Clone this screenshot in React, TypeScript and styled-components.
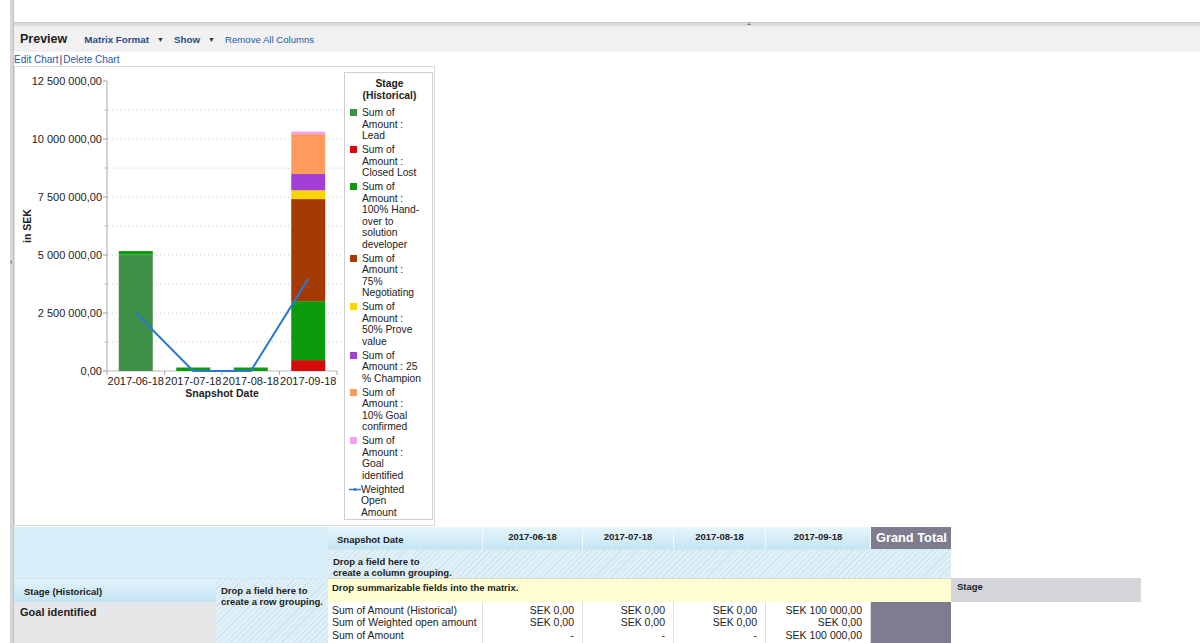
import React, { FC } from 'react';
import styled, { createGlobalStyle } from 'styled-components';

type Segment = { key: string; value: number };
type Bar = { label: string; segments: Segment[]; weighted: number };
type LegendItem = { key: string; color: string; lines: string[]; isLine?: boolean };

const legendItems: LegendItem[] = [
  { key: 'lead', color: '#3e8f47', lines: ['Sum of', 'Amount :', 'Lead'] },
  { key: 'lost', color: '#d40b0b', lines: ['Sum of', 'Amount :', 'Closed Lost'] },
  {
    key: 'handover',
    color: '#0b9b0b',
    lines: ['Sum of', 'Amount :', '100% Hand-', 'over to', 'solution', 'developer'],
  },
  { key: 'nego', color: '#a63a04', lines: ['Sum of', 'Amount :', '75%', 'Negotiating'] },
  { key: 'prove', color: '#f6d500', lines: ['Sum of', 'Amount :', '50% Prove', 'value'] },
  { key: 'champ', color: '#a33fd7', lines: ['Sum of', 'Amount : 25', '% Champion'] },
  { key: 'confirmed', color: '#fd9b5d', lines: ['Sum of', 'Amount :', '10% Goal', 'confirmed'] },
  { key: 'identified', color: '#f5a2ee', lines: ['Sum of', 'Amount :', 'Goal', 'identified'] },
  { key: 'weighted', color: '#2a78d0', lines: ['Weighted', 'Open', 'Amount'], isLine: true },
];

const colorOf = (key: string) => legendItems.find((i) => i.key === key)?.color ?? '#999';

const bars: Bar[] = [
  {
    label: '2017-06-18',
    segments: [
      { key: 'lead', value: 5020000 },
      { key: 'handover', value: 150000 },
    ],
    weighted: 2500000,
  },
  { label: '2017-07-18', segments: [{ key: 'handover', value: 150000 }], weighted: 0 },
  { label: '2017-08-18', segments: [{ key: 'handover', value: 150000 }], weighted: 0 },
  {
    label: '2017-09-18',
    segments: [
      { key: 'lost', value: 470000 },
      { key: 'handover', value: 2540000 },
      { key: 'nego', value: 4400000 },
      { key: 'prove', value: 380000 },
      { key: 'champ', value: 700000 },
      { key: 'confirmed', value: 1720000 },
      { key: 'identified', value: 110000 },
    ],
    weighted: 3970000,
  },
];

const yTicks = ['0,00', '2 500 000,00', '5 000 000,00', '7 500 000,00', '10 000 000,00', '12 500 000,00'];

// chart geometry, in page pixels (svg viewBox is offset to match)
const AXIS_X = 107;
const BASE_Y = 371;
const STEP = 58; // px per 2 500 000
const CAT_W = 57.5;
const BAR_W = 34;
const yOf = (v: number) => BASE_Y - (v / 2500000) * STEP;
const catCenter = (i: number) => AXIS_X + CAT_W * i + CAT_W / 2;

const dateCols = ['2017-06-18', '2017-07-18', '2017-08-18', '2017-09-18'];
const dataValues = [
  ['SEK 0,00', 'SEK 0,00', '-'],
  ['SEK 0,00', 'SEK 0,00', '-'],
  ['SEK 0,00', 'SEK 0,00', '-'],
  ['SEK 100 000,00', 'SEK 0,00', 'SEK 100 000,00'],
];

const GlobalStyle = createGlobalStyle`
  html, body {
    margin: 0;
    padding: 0;
    background: #fff;
    overflow: hidden;
  }
  body {
    font-family: "Liberation Sans", Arial, sans-serif;
    color: #222;
  }
`;

const Chart: FC = () => {
  const axisEnd = AXIS_X + CAT_W * 4;
  const grid: number[] = [];
  for (let i = 1; i < 10; i++) grid.push(BASE_Y - (STEP / 2) * i);

  return (
    <ChartSvg width={329} height={458} viewBox="15 67 329 458">
      {grid.map((y) => (
        <line key={y} x1={AXIS_X + 1} x2={axisEnd + 6} y1={y} y2={y} stroke="#c8c8c8" strokeDasharray="1 3" />
      ))}
      {grid.map((y, i) => (
        <line key={'t' + y} x1={i % 2 === 0 ? AXIS_X - 2 : AXIS_X - 4} x2={AXIS_X} y1={y} y2={y} stroke="#999" />
      ))}
      <line x1={AXIS_X - 4} x2={AXIS_X} y1={BASE_Y - STEP * 5} y2={BASE_Y - STEP * 5} stroke="#999" />
      <line x1={AXIS_X - 4} x2={AXIS_X} y1={BASE_Y} y2={BASE_Y} stroke="#999" />
      <line x1={AXIS_X} x2={AXIS_X} y1={BASE_Y - STEP * 5} y2={BASE_Y + 4} stroke="#a8a8a8" />
      <line x1={AXIS_X} x2={axisEnd} y1={BASE_Y} y2={BASE_Y} stroke="#bbb" />
      {[1, 2, 3, 4].map((i) => (
        <line key={i} x1={AXIS_X + CAT_W * i} x2={AXIS_X + CAT_W * i} y1={BASE_Y} y2={BASE_Y + 4} stroke="#a8a8a8" />
      ))}

      {yTicks.map((t, i) => (
        <AxisText key={t} x={102} y={BASE_Y - STEP * i + 4} textAnchor="end">
          {t}
        </AxisText>
      ))}

      <AxisTitle transform="rotate(-90 31 226)" x={31} y={226} textAnchor="middle">
        in SEK
      </AxisTitle>

      {bars.map((b, i) => {
        let acc = 0;
        const x = catCenter(i) - BAR_W / 2;
        return (
          <g key={b.label}>
            {b.segments.map((s) => {
              const y0 = yOf(acc);
              acc += s.value;
              const y1 = yOf(acc);
              return <rect key={s.key} x={x} y={y1} width={BAR_W} height={y0 - y1} fill={colorOf(s.key)} />;
            })}
            <AxisText x={catCenter(i)} y={BASE_Y + 14} textAnchor="middle">
              {b.label}
            </AxisText>
          </g>
        );
      })}

      <polyline
        points={bars.map((b, i) => `${catCenter(i)},${yOf(b.weighted)}`).join(' ')}
        fill="none"
        stroke={colorOf('weighted')}
        strokeWidth={2}
      />

      <AxisTitle x={AXIS_X + CAT_W * 2} y={BASE_Y + 26} textAnchor="middle">
        Snapshot Date
      </AxisTitle>
    </ChartSvg>
  );
};

const Legend: FC = () => (
  <LegendBox>
    <LegendTitle>
      Stage
      <br />
      (Historical)
    </LegendTitle>
    {legendItems.map((item) => (
      <LegendRow key={item.key}>
        {item.isLine ? (
          <LineMarker width={12} height={7} viewBox="0 0 12 7">
            <line x1={0} x2={12} y1={3.5} y2={3.5} stroke={item.color} strokeWidth={1.5} />
            <circle cx={6} cy={3.5} r={1.6} fill={item.color} />
          </LineMarker>
        ) : (
          <Swatch $color={item.color} />
        )}
        <LegendText>
          {item.lines.map((l) => (
            <div key={l}>{l}</div>
          ))}
        </LegendText>
      </LegendRow>
    ))}
  </LegendBox>
);

const Matrix: FC = () => (
  <MatrixGrid>
    <Corner $col="1 / 3" $row="1 / 3" />
    <HeadCell $col="3" $row="1" $align="left">
      Snapshot Date
    </HeadCell>
    {dateCols.map((d, i) => (
      <HeadCell key={d} $col={String(4 + i)} $row="1" $align="center">
        {d}
      </HeadCell>
    ))}
    <GrandTotalHead $col="8" $row="1">
      Grand Total
    </GrandTotalHead>

    <HatchCell $col="3 / 9" $row="2">
      Drop a field here to
      <br />
      create a column grouping.
    </HatchCell>

    <StageHead $col="1" $row="3">
      Stage (Historical)
    </StageHead>
    <HatchCell $col="2" $row="3 / 5">
      Drop a field here to
      <br />
      create a row grouping.
    </HatchCell>
    <DropHint $col="3 / 9" $row="3">
      Drop summarizable fields into the matrix.
    </DropHint>
    <StageLabel $col="9" $row="3">
      Stage
    </StageLabel>

    <GroupCell $col="1" $row="4">
      Goal identified
    </GroupCell>
    <DataCell $col="3" $row="4" $align="left">
      <div>Sum of Amount (Historical)</div>
      <div>Sum of Weighted open amount</div>
      <div>Sum of Amount</div>
    </DataCell>
    {dataValues.map((vals, i) => (
      <DataCell key={i} $col={String(4 + i)} $row="4" $align="right">
        {vals.map((v, j) => (
          <div key={j}>{v}</div>
        ))}
      </DataCell>
    ))}
    <GrandTotalBody $col="8" $row="4" />
  </MatrixGrid>
);

const App: FC = () => (
  <Page>
    <GlobalStyle />
    <LeftRail>
      <RailArrow />
    </LeftRail>
    <Main>
      <TopBlank />
      <Splitter>
        <SplitHandle />
      </Splitter>
      <PreviewBar>
        <PreviewTitle>Preview</PreviewTitle>
        <MenuLink $bold>Matrix Format</MenuLink>
        <DropArrow>▼</DropArrow>
        <MenuLink $bold>Show</MenuLink>
        <DropArrow>▼</DropArrow>
        <MenuLink>Remove All Columns</MenuLink>
      </PreviewBar>
      <ChartLinks>
        <LinkText>Edit Chart</LinkText>
        <Pipe>|</Pipe>
        <LinkText>Delete Chart</LinkText>
      </ChartLinks>
      <ChartBox>
        <Chart />
        <Legend />
      </ChartBox>
      <Matrix />
    </Main>
  </Page>
);

const Page = styled.div`
  display: flex;
  height: 643px;
  overflow: hidden;
`;

const LeftRail = styled.div`
  flex: 0 0 3px;
  margin-left: 10px;
  background: #d6d6d6;
  border-right: 1px solid #c2c2c2;
  display: flex;
  align-items: center;
  padding-bottom: 120px;
`;

const RailArrow = styled.div`
  width: 0;
  height: 0;
  border-top: 2px solid transparent;
  border-bottom: 2px solid transparent;
  border-right: 2px solid #888;
`;

const Main = styled.div`
  flex: 1;
  display: flex;
  flex-direction: column;
  min-width: 0;

  & > * {
    flex-shrink: 0;
  }
`;

const TopBlank = styled.div`
  height: 22px;
`;

const Splitter = styled.div`
  height: 3px;
  border-top: 1px solid #c4c4c4;
  background: #dcdcdc;
  display: flex;
  padding-left: 733px;
`;

const SplitHandle = styled.div`
  width: 0;
  height: 0;
  border-left: 2px solid transparent;
  border-right: 2px solid transparent;
  border-bottom: 2px solid #777;
`;

const PreviewBar = styled.div`
  height: 26px;
  background: #f1f1f1;
  display: flex;
  align-items: center;
  padding-left: 6px;
`;

const PreviewTitle = styled.span`
  font-size: 12.5px;
  font-weight: bold;
  color: #222;
  margin-right: 17px;
`;

const MenuLink = styled.span<{ $bold?: boolean }>`
  font-size: ${(p) => (p.$bold ? '9.8px' : '9.6px')};
  font-weight: ${(p) => (p.$bold ? 'bold' : 'normal')};
  color: ${(p) => (p.$bold ? '#1f4d8f' : '#2a5aa6')};
`;

const DropArrow = styled.span`
  font-size: 7px;
  color: #333;
  margin: 0 10px 0 8px;
`;

const ChartLinks = styled.div`
  height: 14px;
  display: flex;
  align-items: center;
  font-size: 10px;
`;

const LinkText = styled.span`
  color: #2659b0;
`;

const Pipe = styled.span`
  color: #444;
  margin: 0 1px;
  font-size: 11px;
`;

const ChartBox = styled.div`
  width: 421px;
  height: 460px;
  box-sizing: border-box;
  border: 1px solid #dadada;
  display: flex;
  align-items: flex-start;
`;

const ChartSvg = styled.svg`
  display: block;
  flex: 0 0 auto;
`;

const AxisText = styled.text`
  font-family: "Liberation Sans", Arial, sans-serif;
  font-size: 11px;
  fill: #222;
`;

const AxisTitle = styled.text`
  font-family: "Liberation Sans", Arial, sans-serif;
  font-size: 10.5px;
  font-weight: bold;
  fill: #222;
`;

const LegendBox = styled.div`
  width: 89px;
  height: 448px;
  margin-top: 5px;
  box-sizing: border-box;
  border: 1px solid #cfcfcf;
  padding: 5px 3px 0 5px;
  font-size: 10.3px;
  line-height: 11.5px;
  color: #222;
`;

const LegendTitle = styled.div`
  font-weight: bold;
  text-align: center;
  margin-bottom: 6px;
`;

const LegendRow = styled.div`
  display: flex;
  align-items: flex-start;
  gap: 5px;
  margin-bottom: 2.5px;
`;

const Swatch = styled.span<{ $color: string }>`
  flex: 0 0 7px;
  height: 7px;
  margin-top: 2px;
  background: ${(p) => p.$color};
`;

const LineMarker = styled.svg`
  flex: 0 0 12px;
  margin: 2px -5px 0 -1px;
`;

const LegendText = styled.div`
  white-space: nowrap;
`;

const MatrixGrid = styled.div`
  margin-top: 1px;
  display: grid;
  grid-template-columns: 202px 112px 155px 100px 91px 92px 105px 80px 190px;
  grid-template-rows: 22px 29px 24px 41px;
  font-size: 9.5px;
  color: #222;
`;

const Cell = styled.div<{ $col: string; $row: string }>`
  grid-column: ${(p) => p.$col};
  grid-row: ${(p) => p.$row};
  box-sizing: border-box;
`;

const Corner = styled(Cell)`
  background: #d8eef8;
`;

const HeadCell = styled(Cell)<{ $align: 'left' | 'center' }>`
  background: linear-gradient(#e6f5fc, #c5e5f4);
  border-right: 1px solid #f3fafd;
  font-weight: bold;
  text-align: ${(p) => p.$align};
  padding: ${(p) => (p.$align === 'left' ? '7px 9px 0' : '4px 0 0')};
`;

const GrandTotalHead = styled(Cell)`
  background: #7e7c8e;
  color: #fff;
  font-size: 12.8px;
  font-weight: bold;
  padding: 3px 0 0 5px;
`;

const HatchCell = styled(Cell)`
  background-color: #e1f0f7;
  background-image: repeating-linear-gradient(
    135deg,
    transparent 0 3px,
    rgba(190, 218, 232, 0.55) 3px 4px
  );
  font-weight: bold;
  line-height: 11px;
  padding: 6px 4px 0 5px;
  border-top: 1px solid #d0e6f0;
`;

const StageHead = styled(Cell)`
  background: linear-gradient(#e2f3fb, #c3e4f3);
  font-weight: bold;
  padding: 7px 0 0 10px;
  border-top: 1px solid #cde3ee;
`;

const DropHint = styled(Cell)`
  background: #fefed2;
  border-top: 1px solid #d6dcc4;
  font-weight: bold;
  padding: 3px 4px 0;
`;

const StageLabel = styled(Cell)`
  background: #d4d6dc;
  font-weight: bold;
  padding: 3px 6px 0;
`;

const GroupCell = styled(Cell)`
  background: #e7e7ea;
  font-size: 11px;
  font-weight: bold;
  padding: 4px 6px 0;
`;

const DataCell = styled(Cell)<{ $align: 'left' | 'right' }>`
  background: #fff;
  border-right: 1px solid #dedede;
  font-size: 10.5px;
  line-height: 12.3px;
  white-space: nowrap;
  text-align: ${(p) => p.$align};
  padding: ${(p) => (p.$align === 'left' ? '2px 4px 0' : '2px 8px 0 0')};
`;

const GrandTotalBody = styled(Cell)`
  background: #7e7c8e;
`;

export default App;
